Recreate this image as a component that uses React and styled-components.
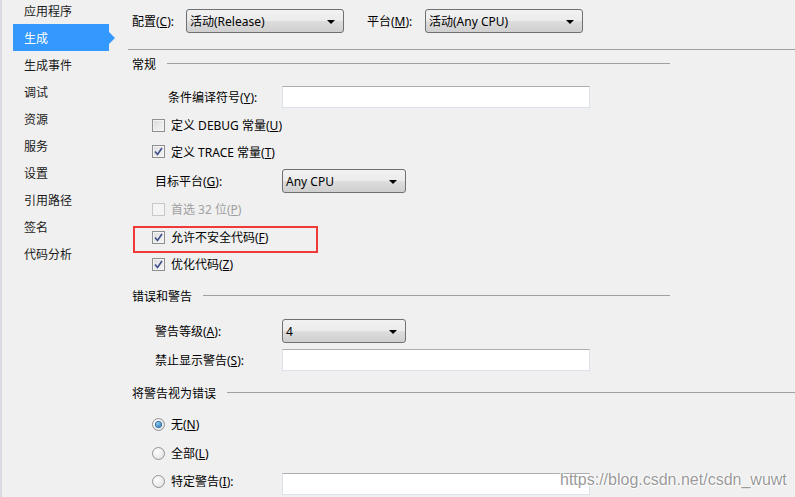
import styled, { createGlobalStyle } from "styled-components";

const GlobalStyle = createGlobalStyle`
  html, body {
    margin: 0;
    padding: 0;
    background: #f0f0f0;
  }
  body {
    width: 795px;
    height: 497px;
    overflow: hidden;
    font-family: "Noto Sans", "Noto Sans CJK SC", sans-serif;
    font-size: 12px;
    color: #000;
  }
`;

const navItems = [
  "应用程序",
  "生成",
  "生成事件",
  "调试",
  "资源",
  "服务",
  "设置",
  "引用路径",
  "签名",
  "代码分析",
];

const Page = styled.div`
  position: relative;
  display: flex;
  width: 795px;
  height: 497px;
  overflow: hidden;
  background: #f0f0f0;
`;

const Sidebar = styled.nav`
  width: 118px;
  flex: none;
  border-left: 2px solid #d9d9e4;
  display: flex;
  flex-direction: column;
  margin-top: -3px;
`;

const NavItem = styled.div`
  position: relative;
  height: 27px;
  margin-left: 11px;
  width: 96px;
  padding-left: 11px;
  box-sizing: border-box;
  display: flex;
  align-items: center;
  color: ${(p) => (p.$active ? "#fff" : "#1a1a1a")};
  background: ${(p) => (p.$active ? "#3399ff" : "transparent")};

  &::after {
    content: "";
    display: ${(p) => (p.$active ? "block" : "none")};
    position: absolute;
    right: -6px;
    top: 50%;
    margin-top: -6px;
    border-left: 6px solid #3399ff;
    border-top: 6px solid transparent;
    border-bottom: 6px solid transparent;
  }
`;

const Main = styled.main`
  flex: 1;
  display: flex;
  flex-direction: column;
  padding-left: 12px;
`;

const Toolbar = styled.div`
  display: flex;
  align-items: center;
  height: 24px;
  margin-top: 9px;
`;

const ToolLabel = styled.span`
  width: ${(p) => p.$w}px;
  margin-left: ${(p) => p.$gap || 0}px;
  flex: none;
`;

const Rule = styled.div`
  height: 1px;
  margin-top: 16px;
  margin-left: -4px;
  background: #a0a0a0;
`;

const SectionHead = styled.div`
  display: flex;
  align-items: center;
  height: ${(p) => p.$h}px;
  width: ${(p) => (p.$full ? "663px" : "538px")};
  gap: 11px;

  &::after {
    content: "";
    flex: 1;
    height: 1px;
    background: #a0a0a0;
    margin-top: -1px;
  }
`;

const Row = styled.div`
  position: relative;
  display: flex;
  align-items: ${(p) => (p.$top ? "flex-start" : "center")};
  height: ${(p) => p.$h}px;
  padding-left: ${(p) => p.$indent || 0}px;
`;

const FieldLabel = styled.span`
  width: ${(p) => p.$w}px;
  flex: none;
  line-height: 17px;
`;

const Select = styled.div`
  position: relative;
  width: ${(p) => p.$w}px;
  height: 24px;
  box-sizing: border-box;
  border: 1px solid #707070;
  border-radius: 3px;
  padding-left: 3px;
  display: flex;
  align-items: center;
  background: linear-gradient(#f2f2f2 0%, #ebebeb 48%, #dddddd 52%, #cfcfcf 100%);
  flex: none;

  &::after {
    content: "";
    position: absolute;
    right: 8px;
    top: 10px;
    border-top: 4px solid #000;
    border-left: 4px solid transparent;
    border-right: 4px solid transparent;
  }
`;

const TextBox = styled.div`
  width: 308px;
  height: 22px;
  box-sizing: border-box;
  background: #fff;
  border: 1px solid #dbe2ea;
  border-top-color: #abadb3;
  flex: none;
`;

const Box = styled.span`
  width: 13px;
  height: 13px;
  box-sizing: border-box;
  border: 1px solid ${(p) => (p.$disabled ? "#c8c8c8" : "#8e8f8f")};
  background: ${(p) =>
    p.$disabled ? "#f4f4f4" : "linear-gradient(135deg, #dcdcdc, #f7f7f7)"};
  box-shadow: inset 0 0 0 1px #f4f4f4;
  display: flex;
  align-items: center;
  justify-content: center;
  margin-right: 6px;
  flex: none;
`;

const Radio = styled.span`
  width: 13px;
  height: 13px;
  box-sizing: border-box;
  border-radius: 50%;
  border: 1px solid #939393;
  background: radial-gradient(circle at 35% 35%, #ffffff, #dcdcdc);
  display: flex;
  align-items: center;
  justify-content: center;
  margin-right: 6px;
  margin-top: ${(p) => p.$nudge || 0}px;
  flex: none;

  &::after {
    content: "";
    display: ${(p) => (p.$on ? "block" : "none")};
    width: 5px;
    height: 5px;
    border-radius: 50%;
    background: radial-gradient(circle at 40% 35%, #8ad0f8, #1c5f9c);
    box-shadow: 0 0 0 1px #2f6fa8;
  }
`;

const Text = styled.span`
  color: ${(p) => (p.$disabled ? "#a0a0a0" : "#000")};
  white-space: nowrap;
`;

const Highlight = styled.div`
  position: absolute;
  left: 1px;
  top: 1px;
  width: 185px;
  height: 27px;
  box-sizing: border-box;
  border: 2px solid #ef3a3a;
`;

const Watermark = styled.div`
  position: absolute;
  left: 560px;
  top: 471px;
  font-family: "Liberation Sans", Arial, sans-serif;
  font-size: 16px;
  color: #9a9a9a;
  text-shadow: 0 0 1px #fff, 1px 0 1px #fff, -1px 0 1px #fff, 0 1px 1px #fff;
`;

function Check({ checked, disabled }) {
  return (
    <Box $disabled={disabled}>
      {checked && (
        <svg width="9" height="9" viewBox="0 0 9 9">
          <path d="M1 4.5 L3.5 7.5 L8 1" fill="none" stroke="#3d4f8a" strokeWidth="1.6" />
        </svg>
      )}
    </Box>
  );
}

function CheckRow({ h, checked, disabled, children, marked }) {
  return (
    <Row $h={h} $indent={20}>
      {marked && <Highlight />}
      <Check checked={checked} disabled={disabled} />
      <Text $disabled={disabled}>{children}</Text>
    </Row>
  );
}

function App() {
  return (
    <Page>
      <GlobalStyle />
      <Sidebar>
        {navItems.map((name) => (
          <NavItem key={name} $active={name === "生成"}>
            {name}
          </NavItem>
        ))}
      </Sidebar>

      <Main>
        <Toolbar>
          <ToolLabel $w={54}>
            配置(<u>C</u>):
          </ToolLabel>
          <Select $w={158}>活动(Release)</Select>
          <ToolLabel $w={58} $gap={23}>
            平台(<u>M</u>):
          </ToolLabel>
          <Select $w={158}>活动(Any CPU)</Select>
        </Toolbar>
        <Rule />

        <SectionHead $h={28}>常规</SectionHead>
        <Row $h={38} $indent={36}>
          <FieldLabel $w={114}>
            条件编译符号(<u>Y</u>):
          </FieldLabel>
          <TextBox />
        </Row>
        <CheckRow h={18}>
          定义 DEBUG 常量(<u>U</u>)
        </CheckRow>
        <CheckRow h={35} checked>
          定义 TRACE 常量(<u>T</u>)
        </CheckRow>
        <Row $h={24} $indent={23}>
          <FieldLabel $w={127}>
            目标平台(<u>G</u>):
          </FieldLabel>
          <Select $w={124}>Any CPU</Select>
        </Row>
        <CheckRow h={32} disabled>
          首选 32 位(<u>P</u>)
        </CheckRow>
        <CheckRow h={24} checked marked>
          允许不安全代码(<u>F</u>)
        </CheckRow>
        <CheckRow h={30} checked>
          优化代码(<u>Z</u>)
        </CheckRow>

        <SectionHead $h={34}>错误和警告</SectionHead>
        <Row $h={36} $indent={23}>
          <FieldLabel $w={127}>
            警告等级(<u>A</u>):
          </FieldLabel>
          <Select $w={124}>4</Select>
        </Row>
        <Row $h={22} $indent={23}>
          <FieldLabel $w={127}>
            禁止显示警告(<u>S</u>):
          </FieldLabel>
          <TextBox />
        </Row>

        <SectionHead $h={44} $full>
          将警告视为错误
        </SectionHead>
        <Row $h={18} $indent={20}>
          <Radio $on />
          <Text>
            无(<u>N</u>)
          </Text>
        </Row>
        <Row $h={40} $indent={20}>
          <Radio />
          <Text>
            全部(<u>L</u>)
          </Text>
        </Row>
        <Row $h={24} $indent={20} $top>
          <Radio $nudge={2} />
          <FieldLabel $w={111}>
            特定警告(<u>I</u>):
          </FieldLabel>
          <TextBox />
        </Row>
      </Main>

      <Watermark>https://blog.csdn.net/csdn_wuwt</Watermark>
    </Page>
  );
}

export default App;
